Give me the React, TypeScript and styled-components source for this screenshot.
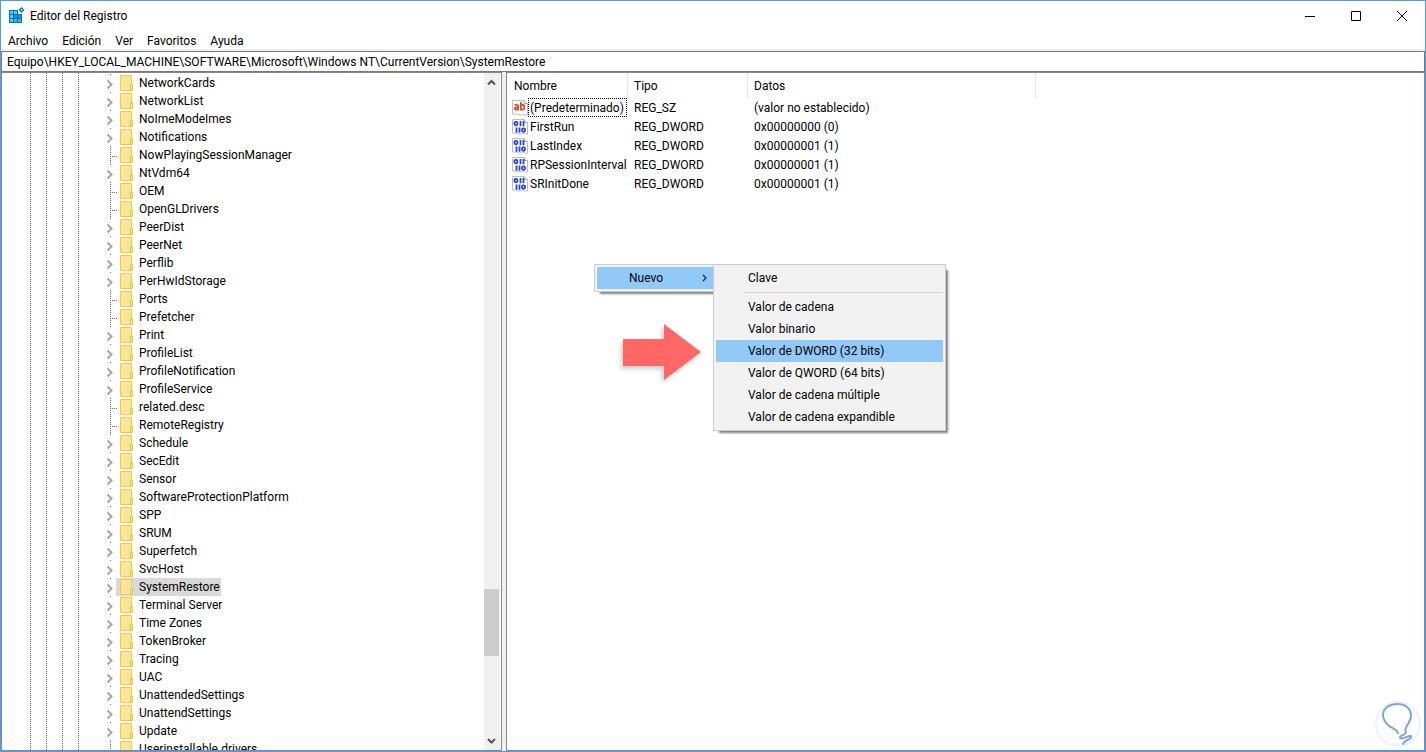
import React from "react";
import styled, { createGlobalStyle, css } from "styled-components";

const GlobalStyle = createGlobalStyle`
  *, *::before, *::after { box-sizing: border-box; }
  html, body { margin: 0; padding: 0; }
  body, button, input { font-family: Roboto, "Open Sans", sans-serif; font-size: 12px; line-height: 18px; color: #000; }
  button { border: 0; background: none; padding: 0; }
  svg { flex: none; overflow: visible; }
`;

const Window = styled.div`
  position: relative;
  display: flex;
  flex-direction: column;
  height: 100vh;
  border: 1px solid #4f9df3;
  background: #fff;
  overflow: hidden;
`;

const TitleBar = styled.header`
  display: flex;
  align-items: center;
  height: 30px;
  padding-left: 7px;
  gap: 6px;
`;

const Title = styled.h1`
  flex: 1;
  margin: 0;
  font-size: 12px;
  font-weight: 400;
`;

const CaptionButtons = styled.div`
  display: flex;
`;

const CaptionButton = styled.button`
  display: flex;
  align-items: center;
  justify-content: center;
  width: 46px;
  height: 30px;
`;

const MenuBar = styled.nav`
  display: flex;
  align-items: center;
  gap: 14px;
  height: 18px;
  padding: 2px 0 0 7px;
`;

const AddressBar = styled.div`
  border-top: 2px solid #f0f0f0;
`;

const AddressInput = styled.input`
  display: block;
  width: 100%;
  height: 21px;
  padding: 0 5px;
  border: 1px solid #7a7a7a;
  outline: 0;
`;

const Panes = styled.main`
  flex: 1;
  display: flex;
  gap: 4px;
  min-height: 0;
  background: #f0f0f0;
`;

const paneFrame = css`
  display: flex;
  min-width: 0;
  border: 1px solid #828790;
  background: #fff;
  overflow: hidden;
`;

const TreePane = styled.section`
  ${paneFrame}
  flex: 0 0 501px;
  padding-right: 1px;
`;

const ListPane = styled.section`
  ${paneFrame}
  flex: 1;
  align-items: flex-start;
  padding-left: 1px;
`;

const Guides = styled.div`
  display: flex;
  gap: 15px;
  padding-left: 28px;
  width: 103px;
`;

const Guide = styled.span`
  width: 1px;
  background: repeating-linear-gradient(to bottom, #6e6e6e 0 1px, transparent 1px 2px);
`;

const Tree = styled.ul`
  flex: 1;
  margin: 0;
  padding: 1px 0 0;
  list-style: none;
`;

const TreeRow = styled.li`
  display: flex;
  height: 18px;
`;

const Branch = styled.span`
  display: flex;
  align-items: center;
  flex: 0 0 11px;
  height: 18px;
`;

const KeyButton = styled.button<{ $selected?: boolean }>`
  display: flex;
  align-items: center;
  gap: 6px;
  height: 18px;
  padding: 0 1px 0 4px;
  white-space: nowrap;
  background: ${(p) => (p.$selected ? "#d9d9d9" : "transparent")};
`;

const ScrollBar = styled.div`
  display: flex;
  flex-direction: column;
  width: 16px;
  padding-right: 1px;
  background: #f0f0f0;
`;

const ScrollButton = styled.button`
  display: flex;
  align-items: center;
  justify-content: center;
  height: 18px;
`;

const Track = styled.div<{ $share: number }>`
  flex: ${(p) => p.$share};
`;

const Thumb = styled.div`
  height: 67px;
  background: #cdcdcd;
`;

const ValueTable = styled.table`
  width: 528px;
  table-layout: fixed;
  border-spacing: 0;
`;

const HeadCell = styled.th<{ $width: number }>`
  width: ${(p) => p.$width}px;
  height: 25px;
  padding: 0 0 0 6px;
  border-right: 1px solid #e5e5e5;
  font-weight: 400;
  text-align: left;
`;

const Cell = styled.td`
  height: 19px;
  padding: 0 0 0 6px;
  white-space: nowrap;
`;

const NameCell = styled(Cell)`
  padding-left: 4px;
`;

const ValueName = styled.div`
  display: flex;
  align-items: center;
`;

const NameLabel = styled.span<{ $focused?: boolean }>`
  padding: 0 2px 0 1px;
  height: 19px;
  border: 1px ${(p) => (p.$focused ? "dotted #000" : "solid transparent")};
  line-height: 18px;
`;

const menuFrame = css`
  position: absolute;
  padding: 2px;
  border: 1px solid #ccc;
  background: #f2f2f2;
  box-shadow: 4px 4px 2px -2px rgba(0, 0, 0, 0.5);
`;

const ContextMenu = styled.div`
  ${menuFrame}
  left: 593px;
  top: 263px;
  width: 122px;
`;

const SubMenu = styled.div`
  ${menuFrame}
  left: 118px;
  top: -1px;
  width: 233px;
`;

const MenuItem = styled.button<{ $active?: boolean }>`
  display: flex;
  align-items: center;
  justify-content: space-between;
  width: 100%;
  height: 22px;
  padding: 0 5px 0 32px;
  white-space: nowrap;
  background: ${(p) => (p.$active ? "#91c9f7" : "transparent")};
`;

const Separator = styled.hr`
  height: 1px;
  margin: 3px 0 3px 28px;
  border: 0;
  background: #d7d7d7;
`;

const Pointer = styled.svg`
  position: absolute;
  left: 613px;
  top: 314px;
  filter: drop-shadow(-2px 3px 2px rgba(0, 0, 0, 0.2));
`;

const Badge = styled.svg`
  position: absolute;
  right: 2px;
  bottom: 2px;
`;

type KeyEntry = [name: string, expandable: boolean];

const keys: KeyEntry[] = [
  ["NetworkCards", true],
  ["NetworkList", true],
  ["NoImeModeImes", true],
  ["Notifications", true],
  ["NowPlayingSessionManager", false],
  ["NtVdm64", true],
  ["OEM", false],
  ["OpenGLDrivers", false],
  ["PeerDist", true],
  ["PeerNet", true],
  ["Perflib", true],
  ["PerHwIdStorage", true],
  ["Ports", false],
  ["Prefetcher", false],
  ["Print", true],
  ["ProfileList", true],
  ["ProfileNotification", true],
  ["ProfileService", true],
  ["related.desc", false],
  ["RemoteRegistry", false],
  ["Schedule", true],
  ["SecEdit", true],
  ["Sensor", true],
  ["SoftwareProtectionPlatform", true],
  ["SPP", true],
  ["SRUM", true],
  ["Superfetch", true],
  ["SvcHost", true],
  ["SystemRestore", true],
  ["Terminal Server", true],
  ["Time Zones", true],
  ["TokenBroker", true],
  ["Tracing", true],
  ["UAC", true],
  ["UnattendedSettings", true],
  ["UnattendSettings", true],
  ["Update", true],
  ["Userinstallable.drivers", false],
];

const values = [
  { name: "(Predeterminado)", type: "REG_SZ", data: "(valor no establecido)" },
  { name: "FirstRun", type: "REG_DWORD", data: "0x00000000 (0)" },
  { name: "LastIndex", type: "REG_DWORD", data: "0x00000001 (1)" },
  { name: "RPSessionInterval", type: "REG_DWORD", data: "0x00000001 (1)" },
  { name: "SRInitDone", type: "REG_DWORD", data: "0x00000001 (1)" },
];

const newItems = [
  "Valor de cadena",
  "Valor binario",
  "Valor de DWORD (32 bits)",
  "Valor de QWORD (64 bits)",
  "Valor de cadena múltiple",
  "Valor de cadena expandible",
];

const AppIcon = () => (
  <svg width="16" height="16" viewBox="0 0 16 16" aria-hidden="true">
    <path d="M1 2h9v4h4v9H1z" fill="#0a73ab" />
    <path d="M2 3h3v3H2zM6 3h3v3H6zM2 7h3v3H2zM2 11h3v3H2z" fill="#4ccbf7" />
    <path d="M6 11h3v3H6zM10 11h3v3h-3z" fill="#38b6ea" />
    <path d="M6 7h3v3H6zM10 7h3v3h-3z" fill="#1896d4" />
    <path d="M13.500-1l3 3-3 3-3-3z" fill="#0a73ab" />
    <path d="M13.500.6l1.400 1.400-1.400 1.400-1.400-1.400z" fill="#6fd8fa" />
  </svg>
);

const BranchMark = ({ expandable }: { expandable: boolean }) => (
  <svg width="11" height="18" viewBox="0 0 11 18" aria-hidden="true">
    {expandable ? (
      <>
        <path d="M2.500 6.500l4 4-4 4" fill="none" stroke="#a6a6a6" strokeWidth="2" />
        <path d="M5 0h1v1H5z" fill="#6e6e6e" />
      </>
    ) : (
      <path d="M5.500 0v18M7 10.500h5" fill="none" stroke="#6e6e6e" strokeDasharray="1 1" />
    )}
  </svg>
);

const Folder = () => (
  <svg width="13" height="16" viewBox="0 0 13 16" aria-hidden="true">
    <path d="M.5.5h11v15H.5z" fill="#ffe694" stroke="#edc951" />
    <path d="M10.500 9.500h2v6h-2z" fill="#ffe694" stroke="#e8c144" />
  </svg>
);

const ValueIcon = ({ text }: { text: boolean }) => (
  <svg width="16" height="16" viewBox="0 0 16 16" aria-hidden="true">
    <path
      d="M.5.5h11.500l3.500 3v11.500c-2 1-3-1-5-.5s-3 1-5 0-3 0-5-.5z"
      fill="#fff"
      stroke="#bdbdbd"
    />
    <path d="M12 .5v3h3.500" fill="#eee" stroke="#a8a8a8" />
    {text ? (
      <g fill="none" stroke="#d9502e" strokeWidth="1.800">
        <path d="M2.500 4.900h2.300q1.300 0 1.300 1.300V10.500M6 7.300H4q-1.300 0-1.300 1.200T4 9.700h2M8.900 2v8.500M9 5h1.800q1.500 0 1.500 1.400v1.800q0 1.400-1.500 1.400H9" />
      </g>
    ) : (
      <g fill="none" stroke="#2546d0" strokeWidth="1.800">
        <rect x="2.400" y="2.900" width="3" height="3.400" rx="1.200" />
        <path d="M8.500 2v5.200M11.500 2v5.200M4.500 8.500v5.200M7.500 8.500v5.200" />
        <rect x="10" y="9.400" width="3" height="3.400" rx="1.200" />
      </g>
    )}
  </svg>
);

export default function App() {
  return (
    <>
      <GlobalStyle />
      <Window>
        <TitleBar>
          <AppIcon />
          <Title>Editor del Registro</Title>
          <CaptionButtons>
            <CaptionButton aria-label="Minimizar">
              <svg width="10" height="10"><path d="M0 5.500h10" stroke="#000" /></svg>
            </CaptionButton>
            <CaptionButton aria-label="Maximizar">
              <svg width="10" height="10"><path d="M.5.5h9v9h-9z" fill="none" stroke="#000" /></svg>
            </CaptionButton>
            <CaptionButton aria-label="Cerrar">
              <svg width="10" height="10"><path d="M0 0l10 10M10 0L0 10" stroke="#000" /></svg>
            </CaptionButton>
          </CaptionButtons>
        </TitleBar>
        <MenuBar>
          {["Archivo", "Edición", "Ver", "Favoritos", "Ayuda"].map((m) => (
            <button key={m}>{m}</button>
          ))}
        </MenuBar>
        <AddressBar>
          <AddressInput
            aria-label="Ruta"
            defaultValue="Equipo\HKEY_LOCAL_MACHINE\SOFTWARE\Microsoft\Windows NT\CurrentVersion\SystemRestore"
          />
        </AddressBar>
        <Panes>
          <TreePane>
            <Guides>
              <Guide /><Guide /><Guide /><Guide />
            </Guides>
            <Tree>
              {keys.map(([name, expandable]) => (
                <TreeRow key={name}>
                  <Branch><BranchMark expandable={expandable} /></Branch>
                  <KeyButton $selected={name === "SystemRestore"}>
                    <Folder />
                    {name}
                  </KeyButton>
                </TreeRow>
              ))}
            </Tree>
            <ScrollBar>
              <ScrollButton aria-label="Subir">
                <svg width="10" height="8"><path d="M1 6.500L4.500 3 8 6.500" fill="none" stroke="#555" strokeWidth="2" /></svg>
              </ScrollButton>
              <Track $share={498} />
              <Thumb />
              <Track $share={76} />
              <ScrollButton aria-label="Bajar">
                <svg width="10" height="8"><path d="M1 2l3.500 3.500L8 2" fill="none" stroke="#555" strokeWidth="2" /></svg>
              </ScrollButton>
            </ScrollBar>
          </TreePane>
          <ListPane>
            <ValueTable>
              <thead>
                <tr>
                  <HeadCell $width={120}>Nombre</HeadCell>
                  <HeadCell $width={120}>Tipo</HeadCell>
                  <HeadCell $width={288}>Datos</HeadCell>
                </tr>
              </thead>
              <tbody>
                {values.map((v, i) => (
                  <tr key={v.name}>
                    <NameCell>
                      <ValueName>
                        <ValueIcon text={i === 0} />
                        <NameLabel $focused={i === 0}>{v.name}</NameLabel>
                      </ValueName>
                    </NameCell>
                    <Cell>{v.type}</Cell>
                    <Cell>{v.data}</Cell>
                  </tr>
                ))}
              </tbody>
            </ValueTable>
          </ListPane>
        </Panes>
        <ContextMenu>
          <MenuItem $active>
            Nuevo
            <svg width="6" height="8"><path d="M1 1l3 3-3 3" fill="none" stroke="#222" strokeWidth="1.200" /></svg>
          </MenuItem>
          <SubMenu>
            <MenuItem>Clave</MenuItem>
            <Separator />
            {newItems.map((t) => (
              <MenuItem key={t} $active={t.includes("DWORD")}>{t}</MenuItem>
            ))}
          </SubMenu>
        </ContextMenu>
        <Pointer width="96" height="72" viewBox="0 0 96 72" aria-hidden="true">
          <path d="M9 24h41V9l37 28-37 28V51H9z" fill="#ff6666" />
        </Pointer>
        <Badge width="50" height="50" viewBox="0 0 50 50" aria-hidden="true">
          <circle cx="25" cy="25" r="22" fill="#fff" stroke="#edf2f9" strokeWidth="2" />
          <path
            d="M25 34C23 29 19 30 15 26C9 20 8 13 14 8C20 4 29 4 34 8C40 13 38 20 35 25C33 29 31 31 33 33C32 37 26 36 27 39C30 41 35 36 38 37C40 40 31 41 30 45"
            fill="none"
            stroke="#80a6d6"
            strokeWidth="2"
            strokeLinecap="round"
          />
        </Badge>
      </Window>
    </>
  );
}
